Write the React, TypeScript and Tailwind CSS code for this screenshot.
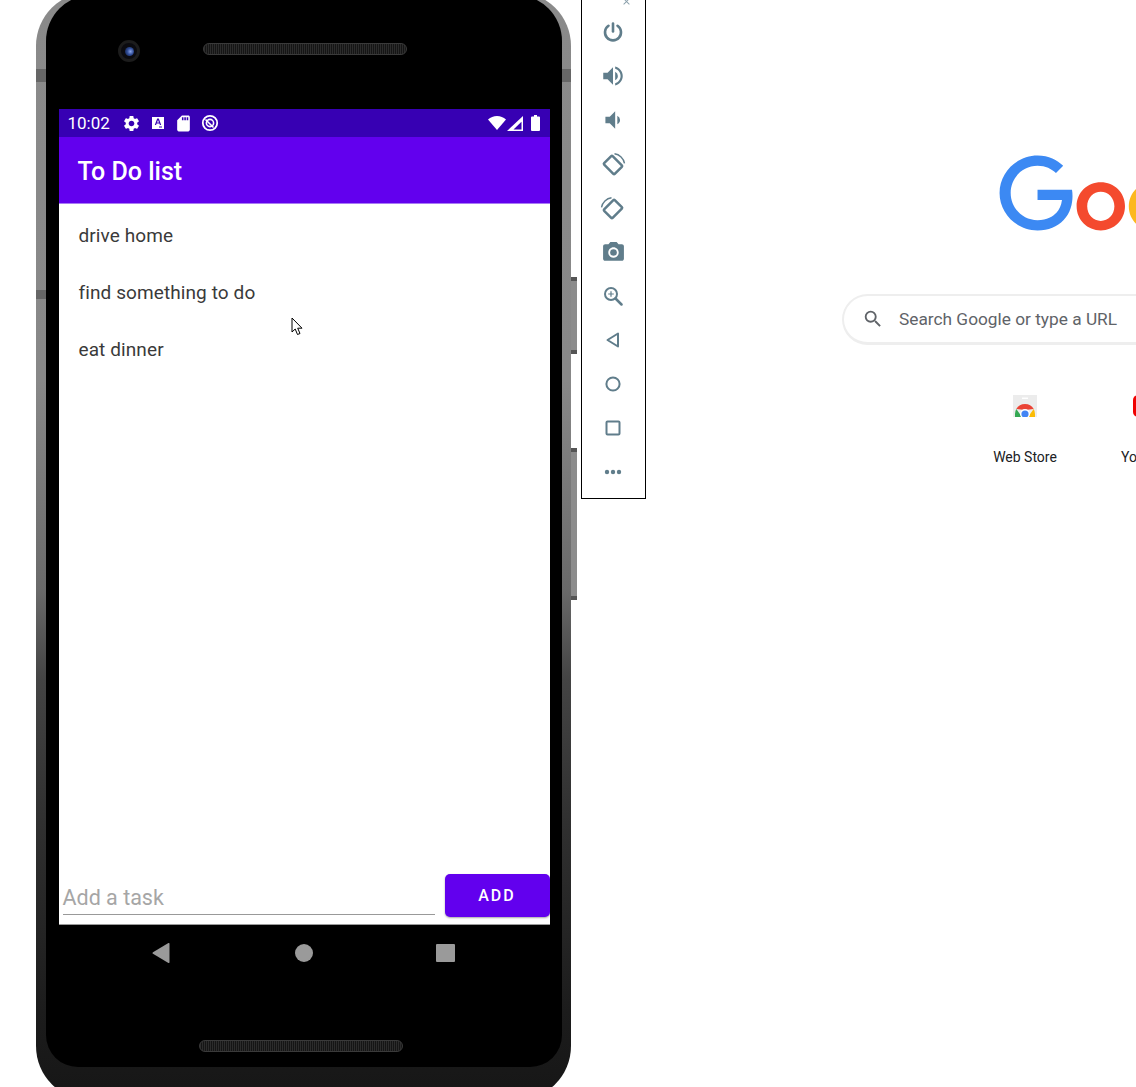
import { MdVolumeUp, MdVolumeDown, MdCameraAlt, MdSettings, MdSdCard, MdSearch, MdClose } from "react-icons/md";

const TOOL = "#607d8b";

function Rotate({ flip }: { flip?: boolean }) {
  return (
    <svg className="translate-y-[1px]" width="26" height="26" viewBox="0 0 26 26" fill="none" stroke={TOOL} style={{ transform: flip ? "scaleX(-1)" : undefined }}>
      <rect x="5.500" y="7" width="15" height="12" rx="1" strokeWidth="2.500" transform="rotate(45 13 13)" />
      <path d="M14.500 1.800a11.500 11.500 0 0 1 10 9.500" strokeWidth="1.400" />
    </svg>
  );
}

function Toolbar() {
  const c = "text-[#607d8b]";
  const row = "flex h-[44px] w-full items-center justify-center";
  return (
    <aside className="relative -mt-[10px] flex h-[509px] w-[65px] shrink-0 flex-col items-center border border-black bg-white pr-[1px] pt-[19px]">
      <MdClose className="absolute right-[13px] top-[5px] text-[#8aa0ab]" size={11} />
      <div className={row}>
        <svg width="20" height="20" viewBox="0 0 20 20" fill="none" stroke={TOOL} strokeWidth="2.600" strokeLinecap="round"><path d="M10 1.500v8" /><path d="M5.500 3.800a8 8 0 1 0 9 0" /></svg>
      </div>
      <div className={row}><MdVolumeUp size={26} className={c} /></div>
      <div className={row}><MdVolumeDown size={26} className={c} /></div>
      <div className={row}><Rotate /></div>
      <div className={row}><Rotate flip /></div>
      <div className={row}><MdCameraAlt size={25} className={c} /></div>
      <div className={row}>
        <svg width="20" height="20" viewBox="0 0 20 20" fill="none" stroke={TOOL}><circle cx="8" cy="8" r="6" strokeWidth="2" /><path d="M12.500 12.500l6 6" strokeWidth="2.500" strokeLinecap="round" /><path d="M8 5.200v5.600M5.200 8h5.600" strokeWidth="1.200" /></svg>
      </div>
      <div className={row}>
        <svg width="18" height="18" viewBox="0 0 18 18" fill="none" stroke={TOOL} strokeWidth="2" strokeLinejoin="round"><path d="M14 2.500v13L3.500 9z" /></svg>
      </div>
      <div className={row}>
        <svg width="18" height="18" viewBox="0 0 18 18" fill="none" stroke={TOOL} strokeWidth="2"><circle cx="9" cy="9" r="6.600" /></svg>
      </div>
      <div className={row}>
        <svg width="18" height="18" viewBox="0 0 18 18" fill="none" stroke={TOOL} strokeWidth="2"><rect x="2.500" y="2.500" width="13" height="13" rx="1" /></svg>
      </div>
      <div className={row}>
        <svg width="18" height="6" viewBox="0 0 18 6" fill={TOOL}><circle cx="3" cy="3" r="2.200" /><circle cx="9" cy="3" r="2.200" /><circle cx="15" cy="3" r="2.200" /></svg>
      </div>
    </aside>
  );
}

function Speaker() {
  return <div className="h-[12px] w-[204px] rounded-full border border-[#3a3a3a] bg-[repeating-linear-gradient(90deg,#2c2c2c_0,#2c2c2c_1px,#151515_1px,#151515_2px)]" />;
}

function StatusBar() {
  return (
    <div className="flex h-[28px] items-center bg-[#3700b3] pl-[9px] pr-[10px] text-white">
      <span className="w-[42px] text-[17px] leading-none">10:02</span>
      <div className="ml-[12px] flex items-center">
        <MdSettings size={19} />
        <svg className="ml-[9px]" width="16" height="16" viewBox="0 0 16 16"><path fill="#fff" d="M2 2h12v12H2z" /><path fill="#3700b3" d="M7.200 3.500h1.600l2.400 6.500H9.900l-.5-1.400H6.600L6.100 10H4.800zM7 7.500h2L8 4.900zM9 11.500h3v1H9z" /></svg>
        <MdSdCard className="ml-[8px]" size={19} />
        <svg className="ml-[8px]" width="18" height="18" viewBox="0 0 18 18" fill="none" stroke="#fff"><circle cx="9" cy="9" r="7.200" strokeWidth="1.800" /><circle cx="9" cy="9" r="3.600" strokeWidth="1.600" /><path d="M4.500 5.500l8 8" strokeWidth="1.600" /></svg>
      </div>
      <div className="ml-auto flex items-center">
        <svg width="18" height="14" viewBox="0 0 18 14"><path fill="#fff" d="M0 3.500C2.500 1.300 5.600 0 9 0s6.500 1.300 9 3.500L9 14z" /></svg>
        <svg className="ml-[1px]" width="16" height="15" viewBox="0 0 16 15"><path fill="#fff" d="M0 15L16 0v15z" /><path fill="#3700b3" d="M6.500 13.500l8-7.700v7.700z" /></svg>
        <svg className="ml-[8px]" width="9" height="16" viewBox="0 0 9 16"><path fill="#fff" d="M3 0h3v1.500h2a1 1 0 0 1 1 1V15a1 1 0 0 1-1 1H1a1 1 0 0 1-1-1V2.500a1 1 0 0 1 1-1h2z" /></svg>
      </div>
    </div>
  );
}

function Task({ text }: { text: string }) {
  return <div className="flex h-[57px] items-center pl-[20px] text-[19px] tracking-[0.1px] text-[#3a3a3a]">{text}</div>;
}

function PhoneScreen() {
  return (
    <section className="flex h-[816px] w-[491px] flex-col bg-white">
      <StatusBar />
      <header className="flex h-[67px] items-center border-b border-[#a87af5] bg-[#6200ee] pl-[19px] pt-[3px] text-[25px] font-medium text-white">To Do list</header>
      <div className="flex flex-1 flex-col pt-[4px]">
        <Task text="drive home" />
        <Task text="find something to do" />
        <Task text="eat dinner" />
      </div>
      <div className="flex items-start pb-[7px] pl-[4px]">
        <div className="mt-[7px] flex h-[34px] w-[372px] items-center border-b border-[#999] pt-[2px] text-[21.500px] text-[#a6a6a6]">Add a task</div>
        <button className="ml-[10px] h-[43px] w-[105px] rounded-[5px] bg-[#6200ee] pt-[1px] text-[16px] font-medium tracking-[2px] text-white shadow-[0_1px_2px_rgba(0,0,0,0.35)]">ADD</button>
      </div>
      <div className="h-px bg-[#9a9a9a]" />
    </section>
  );
}

function SideButton({ cls }: { cls: string }) {
  return (
    <div className={`absolute -right-[6px] flex w-[6px] flex-col justify-between rounded-r-[2px] bg-[#8c8c8c] ${cls}`}>
      <div className="h-[4px] bg-[#555]" />
      <div className="h-[4px] bg-[#555]" />
    </div>
  );
}

function Phone() {
  return (
    <div className="relative -mt-[8px] ml-[36px] h-[1108px] w-[535px] shrink-0">
      <SideButton cls="top-[285px] h-[77px]" />
      <SideButton cls="top-[456px] h-[152px]" />
      <div className="relative h-full rounded-[54px] bg-[linear-gradient(180deg,#8a8a8a_0%,#888888_35%,#6a6a6a_54%,#444444_62%,#303030_75%,#1c1c1c_92%,#161616_100%)] pb-[33px] pl-[10px] pr-[9px] pt-[3px]">
        <div className="absolute left-0 top-[77px] h-[13px] w-[10px] bg-[#666]" />
        <div className="absolute right-0 top-[77px] h-[13px] w-[9px] bg-[#666]" />
        <div className="absolute left-0 top-[298px] h-[9px] w-[10px] bg-[#666]" />
        <div className="relative flex h-full flex-col items-center rounded-b-[32px] rounded-t-[46px] bg-black">
          <div className="relative flex h-[114px] w-full items-start">
            <div className="ml-[72px] mt-[45px] flex h-[22px] w-[22px] items-center justify-center rounded-full border-[3px] border-[#1c1c1c] bg-[#0b0b10]">
              <div className="h-[9px] w-[9px] rounded-full bg-[radial-gradient(circle_at_60%_50%,#8aa4ea_0%,#2f4c96_45%,#101a38_100%)]" />
            </div>
            <div className="ml-[63px] mt-[48px]"><Speaker /></div>
          </div>
          <PhoneScreen />
          <div className="flex h-[111px] w-full flex-col">
            <div className="relative mt-[18px] flex h-[19px] items-center">
              <svg className="ml-[106px]" width="18" height="20" viewBox="0 0 18 20"><path fill="#9a9a9a" d="M17.500 1v18a1 1 0 0 1-1.500.8L1 10.800a1 1 0 0 1 0-1.600L16 .2a1 1 0 0 1 1.500.8z" /></svg>
              <div className="ml-[125px] h-[18px] w-[18px] rounded-full bg-[#9a9a9a]" />
              <div className="ml-[123px] h-[18px] w-[19px] rounded-[1px] bg-[#9a9a9a]" />
            </div>
            <div className="ml-[153px] mt-[78px]"><Speaker /></div>
          </div>
        </div>
      </div>
    </div>
  );
}

function GoogleLogo() {
  return (
    <svg className="ml-[353px] mt-[155px] block shrink-0" width="296" height="100" viewBox="0 0 272 92">
      <path fill="#f44a2e" d="M115.750 47.180c0 12.770-9.990 22.180-22.250 22.180s-22.250-9.410-22.250-22.180C71.250 34.320 81.240 25 93.500 25s22.250 9.320 22.250 22.180zm-9.740 0c0-7.980-5.790-13.440-12.510-13.440S80.990 39.200 80.990 47.180c0 7.900 5.790 13.440 12.510 13.440s12.510-5.550 12.510-13.440z" />
      <path fill="#fcb81f" d="M163.750 47.180c0 12.770-9.990 22.180-22.250 22.180s-22.250-9.410-22.250-22.180c0-12.850 9.990-22.180 22.250-22.180s22.250 9.320 22.250 22.180zm-9.740 0c0-7.980-5.790-13.440-12.510-13.440s-12.510 5.460-12.510 13.440c0 7.900 5.790 13.440 12.510 13.440s12.510-5.550 12.510-13.440z" />
      <path fill="#3c89f3" d="M35.290 41.410V32H67c.31 1.640.47 3.580.47 5.680 0 7.060-1.930 15.790-8.150 22.010-6.050 6.300-13.780 9.660-24.020 9.660C16.320 69.350.36 53.890.36 34.910.36 15.930 16.320.47 35.300.47c10.500 0 17.980 4.120 23.600 9.490l-6.640 6.640c-4.030-3.780-9.490-6.720-16.970-6.720-13.860 0-24.700 11.170-24.700 25.030 0 13.860 10.840 25.030 24.700 25.030 8.990 0 14.110-3.610 17.390-6.890 2.660-2.660 4.410-6.460 5.100-11.650l-22.490.01z" />
    </svg>
  );
}

function WebStoreIcon() {
  return (
    <svg width="24" height="22" viewBox="0 0 24 22">
      <path fill="#ececec" d="M0 0h24v22H0z" />
      <path fill="#fff" d="M9 2.500h6v1.500H9z" />
      <path fill="#ea4335" d="M3.300 14a10 10 0 0 1 17.400 0L12 15z" />
      <path fill="#34a853" d="M3.300 14A10 10 0 0 0 2 19v3h7z" />
      <path fill="#fbbc05" d="M20.700 14a10 10 0 0 1 1.300 5v3h-7z" />
      <circle cx="12" cy="19" r="5" fill="#fff" />
      <circle cx="12" cy="19" r="3.600" fill="#4285f4" />
    </svg>
  );
}

function NewTab() {
  return (
    <main className="flex min-w-0 flex-1 flex-col overflow-hidden">
      <GoogleLogo />
      <div className="ml-[196px] mt-[39px] flex h-[51px] w-[700px] shrink-0 items-center rounded-full border-2 border-b-[3px] border-[#eeeeee] bg-white pl-[18px]">
        <MdSearch size={22} className="text-[#5f6368]" />
        <span className="ml-[15px] pt-[1px] text-[17.300px] text-[#5f6368]">Search Google or type a URL</span>
      </div>
      <div className="ml-[367px] mt-[50px] flex shrink-0">
        <div className="flex w-[24px] flex-col items-center">
          <WebStoreIcon />
          <span className="mt-[32px] whitespace-nowrap text-[14px] leading-[16px] text-[#202124]">Web Store</span>
        </div>
        <div className="ml-[96px] flex flex-col">
          <div className="h-[22px] w-[12px] rounded-[5px] bg-[#f00000]" />
          <span className="-ml-[12px] mt-[32px] whitespace-nowrap text-[14px] leading-[16px] text-[#202124]">YouTube</span>
        </div>
      </div>
    </main>
  );
}

export default function App() {
  return (
    <div className="relative flex h-[1087px] w-[1136px] overflow-hidden bg-white font-['Roboto',sans-serif]">
      <Phone />
      <div className="ml-[10px]"><Toolbar /></div>
      <NewTab />
      <svg className="absolute left-[291px] top-[317px]" width="14" height="20" viewBox="0 0 14 20">
        <path fill="#fff" stroke="#000" strokeWidth="1" d="M1 1v14l3.200-3 2.300 5.500 2.500-1-2.300-5.300h4.300z" />
      </svg>
    </div>
  );
}
